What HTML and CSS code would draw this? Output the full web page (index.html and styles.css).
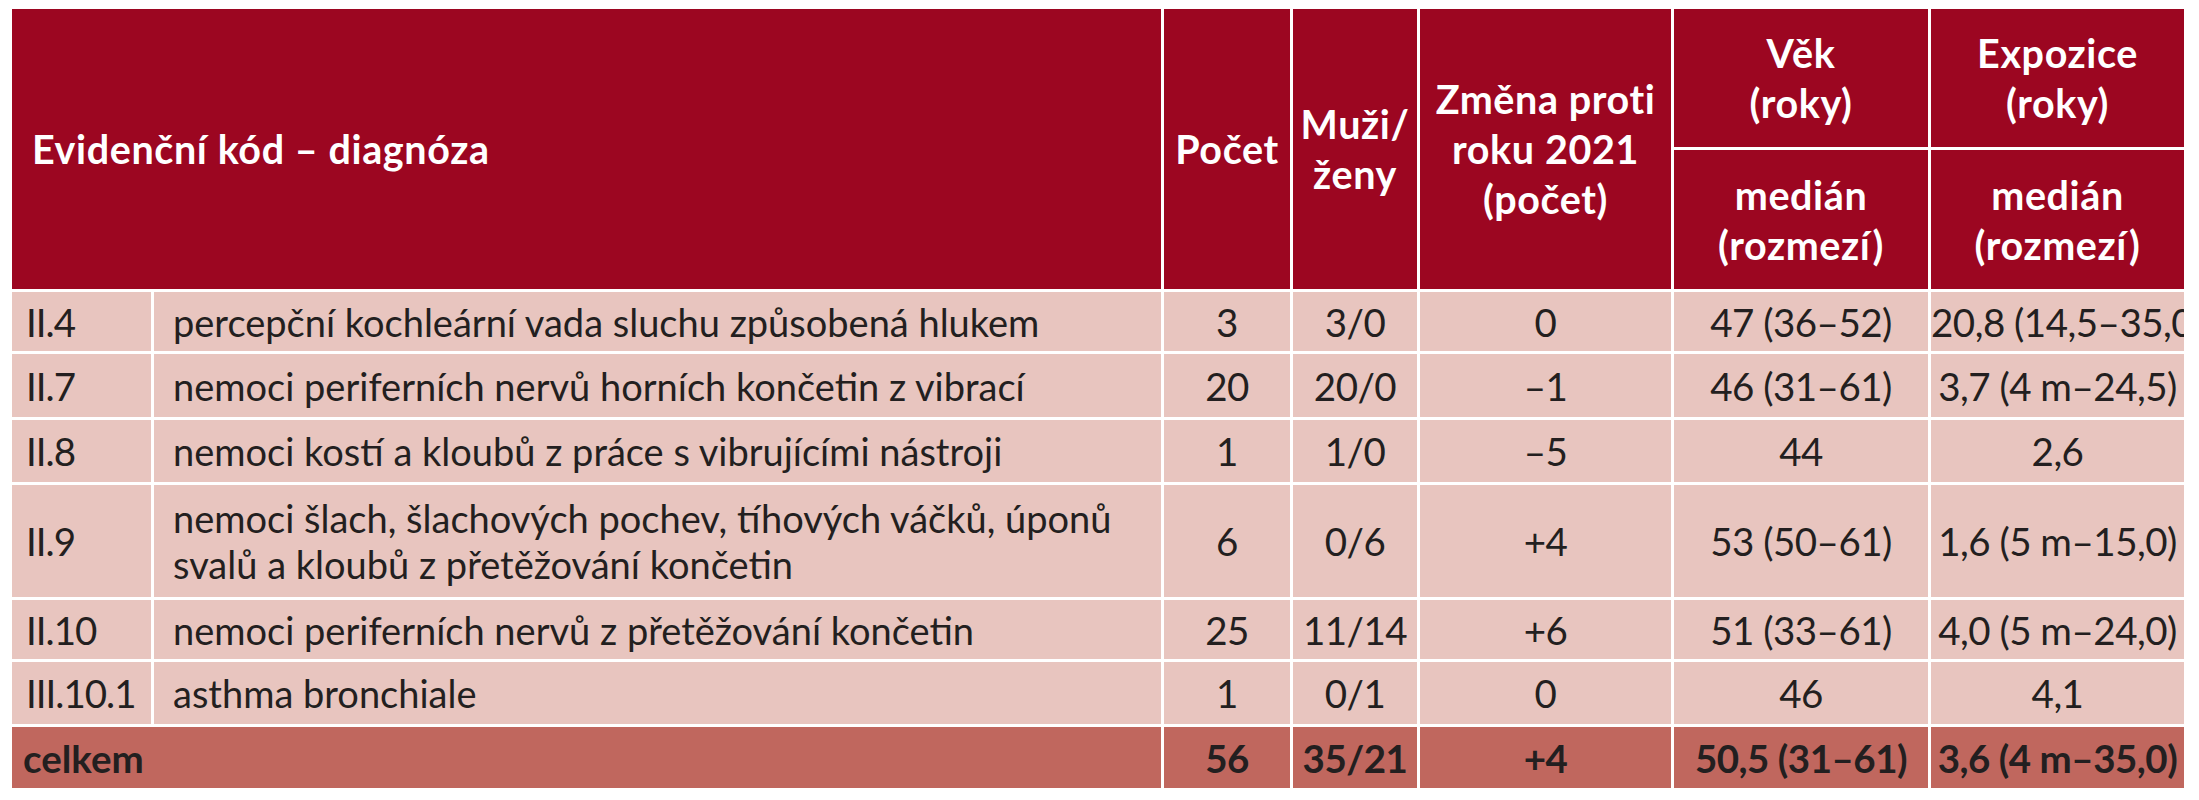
FILE: index.html
```html
<!DOCTYPE html>
<html lang="cs">
<head>
<meta charset="utf-8">
<title>Tabulka</title>
<link rel="stylesheet" href="styles.css">
</head>
<body>
<div class="tbl">
  <div class="h h-diag">Evidenční kód – diagnóza</div>
  <div class="h h-full">Počet</div>
  <div class="h h-full">Muži/<br>ženy</div>
  <div class="h h-full">Změna proti<br>roku 2021<br>(počet)</div>
  <div class="h">Věk<br>(roky)</div>
  <div class="h">Expozice<br>(roky)</div>
  <div class="h">medián<br>(rozmezí)</div>
  <div class="h">medián<br>(rozmezí)</div>

  <div class="d code">II.4</div><div class="d diag">percepční kochleární vada sluchu způsobená hlukem</div><div class="d n">3</div><div class="d n">3/0</div><div class="d n">0</div><div class="d n">47 (36–52)</div><div class="d n">20,8 (14,5–35,0)</div>
  <div class="d code">II.7</div><div class="d diag">nemoci periferních nervů horních končetin z vibrací</div><div class="d n">20</div><div class="d n">20/0</div><div class="d n">–1</div><div class="d n">46 (31–61)</div><div class="d n">3,7 (4 m–24,5)</div>
  <div class="d code">II.8</div><div class="d diag">nemoci kostí a kloubů z práce s vibrujícími nástroji</div><div class="d n">1</div><div class="d n">1/0</div><div class="d n">–5</div><div class="d n">44</div><div class="d n">2,6</div>
  <div class="d code">II.9</div><div class="d diag">nemoci šlach, šlachových pochev, tíhových váčků, úponů<br>svalů a kloubů z přetěžování končetin</div><div class="d n">6</div><div class="d n">0/6</div><div class="d n">+4</div><div class="d n">53 (50–61)</div><div class="d n">1,6 (5 m–15,0)</div>
  <div class="d code">II.10</div><div class="d diag">nemoci periferních nervů z přetěžování končetin</div><div class="d n">25</div><div class="d n">11/14</div><div class="d n">+6</div><div class="d n">51 (33–61)</div><div class="d n">4,0 (5 m–24,0)</div>
  <div class="d code">III.10.1</div><div class="d diag">asthma bronchiale</div><div class="d n">1</div><div class="d n">0/1</div><div class="d n">0</div><div class="d n">46</div><div class="d n">4,1</div>
  <div class="t t-label">celkem</div><div class="t n">56</div><div class="t n">35/21</div><div class="t n">+4</div><div class="t n">50,5 (31–61)</div><div class="t n">3,6 (4 m–35,0)</div>
</div>
</body>
</html>
```
FILE: styles.css
```css
html, body {
  margin: 0;
  padding: 0;
  background: #ffffff;
}
body {
  font-family: "Lato", "Liberation Sans", sans-serif;
  color: #231f20;
}
.tbl {
  display: grid;
  grid-template-columns: 139px 1007px 126px 124px 251px 254px 253px;
  grid-template-rows: 138px 139px 59px 63px 62px 112px 59px 62px 61px;
  gap: 3px;
  margin: 9px 0 0 12px;
  width: 2172px;
}
.h {
  background: #9c0621;
  color: #ffffff;
  font-weight: 700;
  font-size: 39.5px;
  letter-spacing: 0.6px;
  line-height: 50px;
  display: flex;
  align-items: center;
  justify-content: center;
  text-align: center;
}
.h-diag {
  grid-column: 1 / 3;
  grid-row: 1 / 3;
  justify-content: flex-start;
  padding-left: 20px;
}
.h-full { grid-row: 1 / 3; }
.d, .t {
  font-size: 38.5px;
  line-height: 46px;
  display: flex;
  align-items: center;
  white-space: nowrap;
  overflow: hidden;
}
.d { background: #e8c5bf; }
.t { background: #c0675e; font-weight: 700; }
.code { padding-left: 14px; letter-spacing: -1px; }
.diag { padding-left: 19px; font-size: 38px; }
.t-label { grid-column: 1 / 3; padding-left: 11px; }
.n {
  justify-content: center;
  justify-content: safe center;
  letter-spacing: -0.5px;
}
```
